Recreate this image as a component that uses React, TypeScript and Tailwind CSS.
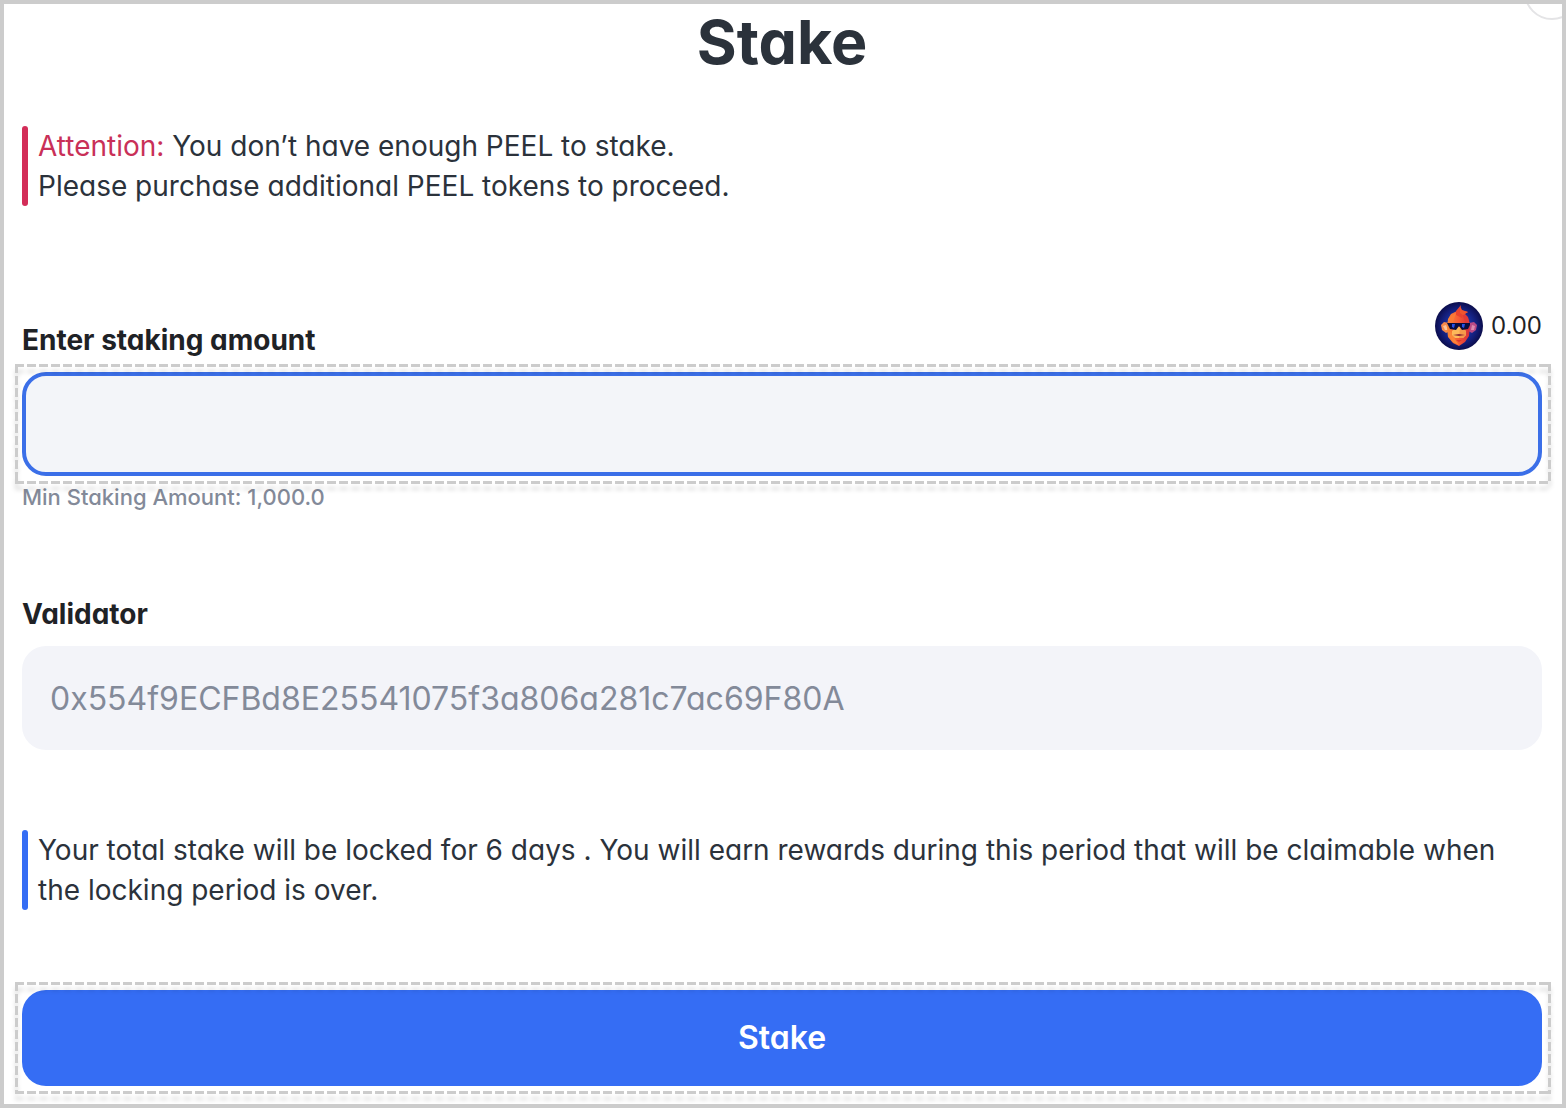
const frame =
  "relative before:pointer-events-none before:absolute before:-left-[7px] before:-right-[9px] before:-inset-y-2 before:content-[''] before:drop-shadow-[0_6px_2px_rgba(0,0,0,0.12)] before:[background-image:repeating-linear-gradient(90deg,#cccccc_0_9px,transparent_9px_12px),repeating-linear-gradient(90deg,#cccccc_0_9px,transparent_9px_12px),repeating-linear-gradient(180deg,#cccccc_0_9px,transparent_9px_12px),repeating-linear-gradient(180deg,#cccccc_0_9px,transparent_9px_12px)] before:[background-position:top,bottom,left,right] before:bg-no-repeat before:[background-size:100%_3px,100%_3px,3px_100%,3px_100%]";

function TokenIcon() {
  return (
    <svg viewBox="0 0 48 48" className="size-12" aria-hidden="true">
      <defs>
        <radialGradient id="sky">
          <stop offset="0.3" stopColor="#1d3bb4" />
          <stop offset="0.75" stopColor="#131d78" />
          <stop offset="1" stopColor="#0b0d4c" />
        </radialGradient>
        <linearGradient id="fur" x1="0" x2="1">
          <stop offset="0" stopColor="#f98a35" />
          <stop offset="0.5" stopColor="#f65a35" />
          <stop offset="1" stopColor="#d42b3c" />
        </linearGradient>
      </defs>
      <circle cx="24" cy="24" r="24" fill="url(#sky)" />
      <path d="M6 23l3-3 5 1 1 8-4 2-4-3z" fill="#f58a4c" />
      <path d="M8 24l3-1 2 5-3 0z" fill="#fcc59b" />
      <path d="M42 23l-3-3-5 1-1 8 4 2 4-3z" fill="#b94a86" />
      <path d="M40 24l-3-1-1 5 3 0z" fill="#dd8aaf" />
      <path d="M13 17l3-5 6-3 6 1 5 5 2 8-1 11-4 6-6 4-6-3-5-6-1-9z" fill="url(#fur)" />
      <path d="M16 14l5-3-3 9-5 1z" fill="#fa7a36" />
      <path d="M13 29l4 2 4 8 3 4-6-3-4-6z" fill="#fb8438" />
      <path d="M27 11l6 5 2 8-5-4z" fill="#e13a38" />
      <path d="M21 13l0-4 5-6-1 5 8 2-5 3-1 3z" fill="#e8432f" />
      <path d="M25 4l2 4 6 2-5 3-3-2z" fill="#f0552f" />
      <path d="M17 29l5-4 4 0 5 4 0 4-3 3-8 0-3-3z" fill="#fdb85a" />
      <path d="M25 25l6 4 0 4-3 3-4 0z" fill="#f79a4b" />
      <path d="M12 21h23v2l-2 4-6 1-3-4-3 4-6-1-2-4z" fill="#0a0d3e" />
      <path d="M17 22h3l-1 4-2-1zM27 22h3l-1 4-2-1z" fill="#2852e8" />
      <path d="M18 33l6-1 6 1-6 1z" fill="#8b2635" />
      <path d="M21 38h6l-3 2z" fill="#d9372f" />
    </svg>
  );
}

export default function App() {
  return (
    <main className="relative min-h-screen overflow-hidden border-4 border-[#cccccc] bg-white pr-5 pb-[18px] pl-[18px] font-['Inter',sans-serif] text-[#2b323b] [font-feature-settings:'cv11']">
      <div className="absolute -top-[40px] -right-[18px] size-14 rounded-full border-2 border-[#e4e4e6]" />
      <h1 className="pt-0.5 text-center text-[61px] leading-[72px] font-bold">Stake</h1>

      <div className="mt-12 flex gap-[10px] text-[28px] leading-10">
        <span className="w-1.5 shrink-0 rounded-full bg-[#d32d58]" />
        <p>
          <span className="text-[#c93058]">Attention:</span> You don’t have enough PEEL to stake.
          <br />
          Please purchase additional PEEL tokens to proceed.
        </p>
      </div>

      <form>
        <div className="mt-24 flex items-end justify-between text-[#1f2226]">
          <label htmlFor="amount" className="text-[28px] leading-10 font-bold">
            Enter staking amount
          </label>
          <div className="mb-2.5 flex items-center gap-2 text-2xl">
            <TokenIcon />
            0.00
          </div>
        </div>
        <div className={`${frame} mt-3`}>
          <input
            id="amount"
            className="block h-[104px] w-full rounded-3xl border-4 border-[#3b6fe8] bg-[#f3f5f9] px-6 text-[32px] outline-none"
          />
        </div>
        <p className="mt-[7px] text-[22px] leading-7 font-medium text-[#838a99]">Min Staking Amount: 1,000.0</p>

        <label htmlFor="validator" className="mt-[83px] block text-[28px] leading-10 font-bold text-[#1f2226]">
          Validator
        </label>
        <input
          id="validator"
          readOnly
          value="0x554f9ECFBd8E25541075f3a806a281c7ac69F80A"
          className="mt-3 block h-[104px] w-full rounded-3xl bg-[#f3f4f9] px-7 text-[32px] text-[#838a99] outline-none"
        />

        <div className="mt-20 flex gap-[10px] text-[28px] leading-10">
          <span className="w-1.5 shrink-0 rounded-full bg-[#356df4]" />
          <p>
            Your total stake will be locked for 6 days . You will earn rewards during this period that will be
            claimable when the locking period is over.
          </p>
        </div>

        <div className={`${frame} mt-20`}>
          <button type="button" className="block h-24 w-full rounded-3xl bg-[#356df4] text-[32px] font-semibold text-white">
            Stake
          </button>
        </div>
      </form>
    </main>
  );
}
